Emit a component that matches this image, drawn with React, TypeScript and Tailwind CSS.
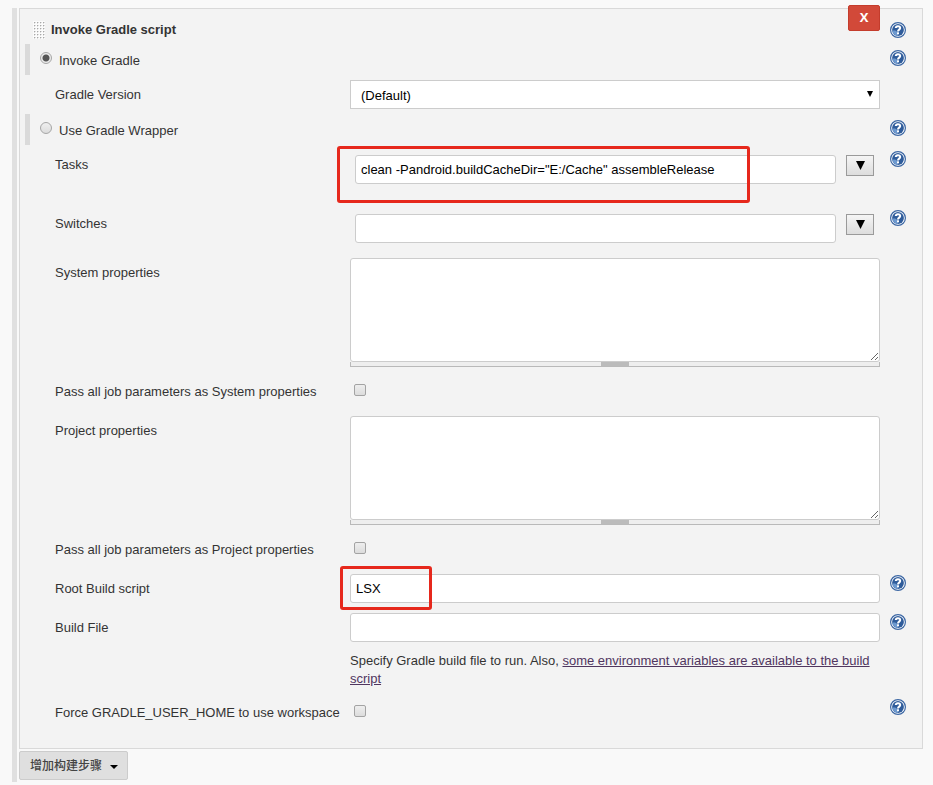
import type { ReactNode } from "react";

function HelpButton({ topic }: { topic: string }) {
  return (
    <button type="button" aria-label={`Help for ${topic}`} className="block size-4">
      <svg viewBox="0 0 16 16" className="size-4" fill="none" aria-hidden="true">
        <circle cx="8" cy="8" r="7.4" fill="#fff" stroke="#3b66a3" strokeWidth="1.2" />
        <circle cx="8" cy="8" r="5.9" fill="#2f5c9b" />
        <path d="M8 13.8A5.9 5.9 0 0 1 2.2 9C4.4 8 8 8.4 8 13.8Z" fill="#6d99cf" />
        <path
          d="M5.8 6.1C5.8 3.6 10.2 3.6 10.2 6C10.2 7.6 8 7.6 8 9.4"
          stroke="#fff"
          strokeWidth="2"
        />
        <rect x="7" y="10.3" width="2" height="2" fill="#fff" />
      </svg>
    </button>
  );
}

function Row({
  label,
  htmlFor,
  help,
  children,
}: {
  label: string;
  htmlFor: string;
  help?: boolean;
  children: ReactNode;
}) {
  return (
    <div className="grid grid-cols-[330px_minmax(0,1fr)_42px] py-[5px]">
      <div className="pt-[6px] pl-[35px]">
        <label htmlFor={htmlFor} className="block whitespace-nowrap">
          {label}
        </label>
      </div>
      <div>{children}</div>
      <div className="pt-px pl-[10px]">{help && <HelpButton topic={label} />}</div>
    </div>
  );
}

function RadioRow({ id, label, checked }: { id: string; label: string; checked?: boolean }) {
  return (
    <div className="flex h-[31px] pl-[5px]">
      <div className="w-[5px] bg-[#dadada]" />
      <div className="flex flex-1 gap-[7px] pl-[10px]">
        <input
          id={id}
          type="radio"
          name="gradle-source"
          defaultChecked={checked}
          className="mt-2 size-3 appearance-none rounded-full border border-[#a6a6a6] bg-linear-to-b from-[#efefef] to-[#dcdcdc] checked:bg-[radial-gradient(circle,#555_0_3px,#ececec_4px)]"
        />
        <label htmlFor={id} className="mt-2">
          {label}
        </label>
      </div>
      <div className="w-[32px] pt-[6px]">
        <HelpButton topic={label} />
      </div>
    </div>
  );
}

const inputClass =
  "block h-[29px] w-full min-w-0 rounded-[3px] border border-[#ccc] bg-white px-[5px] text-black outline-none";

function ExpandableInput({ id, value }: { id: string; value?: string }) {
  return (
    <div className="flex gap-[10px] pt-[5px] pr-[6px] pl-[5px]">
      <input id={id} type="text" defaultValue={value} className={inputClass} />
      <button
        type="button"
        aria-label="Expand to multiple lines"
        className="flex h-[21px] w-7 shrink-0 items-center justify-center border border-[#9a9a9a] bg-linear-to-b from-[#f5f5f5] to-[#dddddd]"
      >
        <svg viewBox="0 0 9 9" className="size-[9px]" aria-hidden="true">
          <path d="M0 0H9L4.5 9Z" fill="#000" />
        </svg>
      </button>
    </div>
  );
}

function PropertiesArea({ id }: { id: string }) {
  return (
    <div>
      <textarea
        id={id}
        className="block h-[104px] w-full resize-y rounded-[3px] border border-[#ccc] bg-white px-[5px] text-black outline-none"
      />
      <div className="flex h-[5px] justify-center border-x border-b border-[#b9b9b9] bg-[#eee]">
        <div className="h-1 w-7 bg-[#bbb]" />
      </div>
    </div>
  );
}

function Checkbox({ id }: { id: string }) {
  return (
    <div className="h-[29px] pt-[7px] pl-1">
      <input
        id={id}
        type="checkbox"
        className="block size-3 appearance-none rounded-[2px] border border-[#a3a3a3] bg-linear-to-b from-[#eee] to-[#dcdcdc]"
      />
    </div>
  );
}

function DragHandle() {
  return (
    <svg width="12" height="18" aria-hidden="true" className="mt-3">
      <defs>
        <pattern id="grip" width="3" height="3" patternUnits="userSpaceOnUse">
          <rect width="3" height="3" fill="#fbfbfb" />
          <rect x="1" y="1" width="1" height="1" fill="#a8a8a8" />
          <rect x="2" y="1" width="1" height="1" fill="#dedede" />
          <rect x="1" y="2" width="1" height="1" fill="#dedede" />
        </pattern>
      </defs>
      <rect width="12" height="18" fill="url(#grip)" />
    </svg>
  );
}

export default function App() {
  return (
    <div className="min-h-screen bg-[#f9f9f9] pt-2 pr-[10px] pl-3 font-['Liberation_Sans',Arial,'Noto_Sans_CJK_SC',sans-serif] text-[13px] leading-[18px] text-[#333]">
      <div className="border-l-[5px] border-[#e0e0e0] pb-[2px] pl-[2px]">
        <section className="border border-[#d9d9d9] bg-[#f3f3f3] pb-4">
          <header className="flex h-[35px] items-start pl-[13px]">
            <DragHandle />
            <h2 className="mt-3 ml-[6px] flex-1 font-bold">Invoke Gradle script</h2>
            <button
              type="button"
              aria-label="Delete build step"
              className="-mt-1 h-[26px] w-8 rounded-[2px] border border-[#c43c2c] bg-[#d24939] pb-[2px] font-['Open_Sans',sans-serif] text-[13px] leading-[22px] font-bold text-white"
            >
              X
            </button>
            <div className="w-[42px] pt-[13px] pl-[10px]">
              <HelpButton topic="Invoke Gradle script" />
            </div>
          </header>

          <RadioRow id="invoke-gradle" label="Invoke Gradle" checked />
          <Row label="Gradle Version" htmlFor="gradle-version">
            <div className="relative">
              <select
                id="gradle-version"
                className="block h-[29px] w-full appearance-none border border-[#ccc] bg-white px-[10px] pt-[2px] text-black outline-none"
              >
                <option>(Default)</option>
              </select>
              <svg
                viewBox="0 0 6 6"
                className="pointer-events-none absolute top-[11px] right-[7px] size-[6px]"
                aria-hidden="true"
              >
                <path d="M0 0H6L3 6Z" fill="#000" />
              </svg>
            </div>
          </Row>
          <RadioRow id="gradle-wrapper" label="Use Gradle Wrapper" />

          <Row label="Tasks" htmlFor="tasks" help>
            <div className="relative pb-[15px]">
              <ExpandableInput
                id="tasks"
                value={'clean -Pandroid.buildCacheDir="E:/Cache" assembleRelease'}
              />
              <div className="pointer-events-none absolute -top-1 -left-[13px] h-[57px] w-[413px] rounded-[3px] border-[3px] border-[#e6281c]" />
            </div>
          </Row>
          <Row label="Switches" htmlFor="switches" help>
            <div className="pb-[5px]">
              <ExpandableInput id="switches" />
            </div>
          </Row>
          <Row label="System properties" htmlFor="system-properties">
            <PropertiesArea id="system-properties" />
          </Row>
          <Row label="Pass all job parameters as System properties" htmlFor="pass-system">
            <Checkbox id="pass-system" />
          </Row>
          <Row label="Project properties" htmlFor="project-properties">
            <PropertiesArea id="project-properties" />
          </Row>
          <Row label="Pass all job parameters as Project properties" htmlFor="pass-project">
            <Checkbox id="pass-project" />
          </Row>
          <Row label="Root Build script" htmlFor="root-build-script" help>
            <div className="relative">
              <input id="root-build-script" type="text" defaultValue="LSX" className={inputClass} />
              <div className="pointer-events-none absolute -top-2 -left-[10px] h-[44px] w-[92px] rounded-[3px] border-[3px] border-[#e6281c]" />
            </div>
          </Row>
          <Row label="Build File" htmlFor="build-file" help>
            <input id="build-file" type="text" className={inputClass} />
            <p className="pt-[10px]">
              Specify Gradle build file to run. Also,{" "}
              <a href="#environment-variables" className="text-[#50365f] underline">
                some environment variables are available to the build script
              </a>
            </p>
          </Row>
          <Row label="Force GRADLE_USER_HOME to use workspace" htmlFor="force-home" help>
            <Checkbox id="force-home" />
          </Row>
        </section>

        <button
          type="button"
          className="mt-[2px] flex h-[29px] items-center gap-2 rounded-[2px] border border-[#ccc] bg-[#dfdfdf] px-[9px] pl-[10px] text-[12px] font-medium text-[#444]"
        >
          增加构建步骤
          <svg viewBox="0 0 8 4" className="mt-[2px] h-1 w-2" aria-hidden="true">
            <path d="M0 0H8L4 4Z" fill="#000" />
          </svg>
        </button>
      </div>
    </div>
  );
}
